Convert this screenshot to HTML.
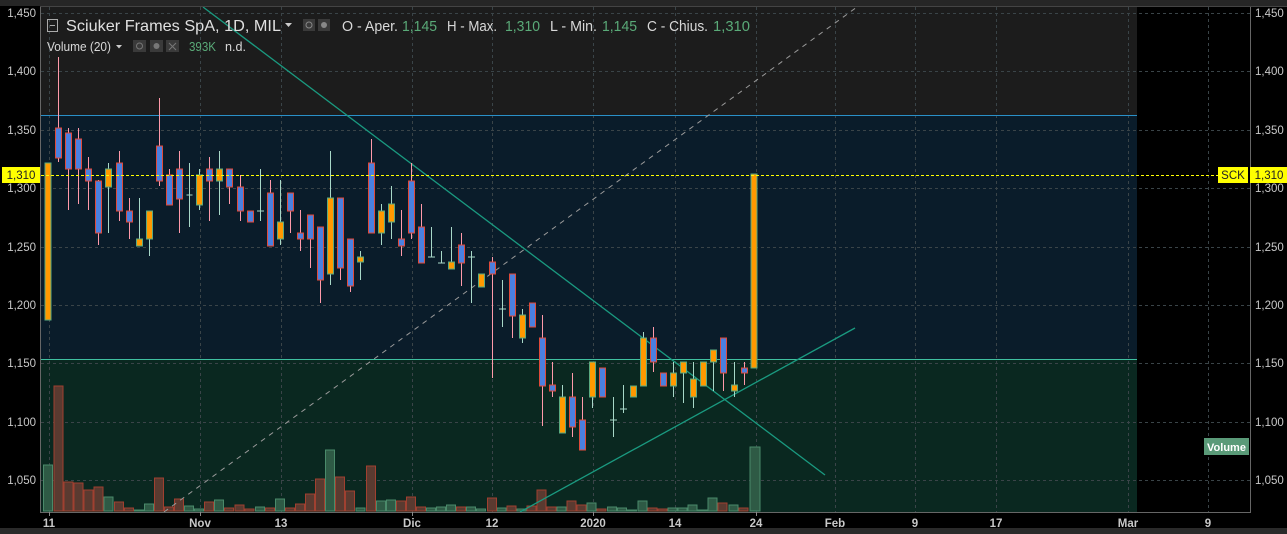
<!DOCTYPE html>
<html><head><meta charset="utf-8"><style>
html,body{margin:0;padding:0;background:#000;width:1287px;height:534px;overflow:hidden}
svg{display:block}
text{font-family:"Liberation Sans",sans-serif}
</style></head><body>
<svg width="1287" height="534" viewBox="0 0 1287 534" xmlns="http://www.w3.org/2000/svg">
<rect x="0" y="0" width="1287" height="534" fill="#000"/>
<rect x="0" y="0" width="1287" height="6" fill="#262626"/>
<rect x="0" y="528" width="1287" height="6" fill="#2a2a2a"/>
<rect x="41" y="7" width="1096" height="108" fill="#1c1c1c"/>
<rect x="41" y="115" width="1096" height="244" fill="#0a1c2a"/>
<rect x="41" y="359" width="1096" height="153" fill="#0a2820"/>
<g stroke="#3a4448" stroke-width="1" stroke-dasharray="3,3" shape-rendering="crispEdges">
<line x1="41" y1="13.5" x2="1250" y2="13.5"/><line x1="41" y1="71.5" x2="1250" y2="71.5"/>
<line x1="41" y1="130.5" x2="1250" y2="130.5"/><line x1="41" y1="188.5" x2="1250" y2="188.5"/>
<line x1="41" y1="247.5" x2="1250" y2="247.5"/><line x1="41" y1="305.5" x2="1250" y2="305.5"/>
<line x1="41" y1="363.5" x2="1250" y2="363.5"/><line x1="41" y1="422.5" x2="1250" y2="422.5"/>
<line x1="41" y1="480.5" x2="1250" y2="480.5"/>
<line x1="49.5" y1="7" x2="49.5" y2="512"/><line x1="200.5" y1="7" x2="200.5" y2="512"/>
<line x1="281.5" y1="7" x2="281.5" y2="512"/><line x1="412.5" y1="7" x2="412.5" y2="512"/>
<line x1="492.5" y1="7" x2="492.5" y2="512"/><line x1="593.5" y1="7" x2="593.5" y2="512"/>
<line x1="675.5" y1="7" x2="675.5" y2="512"/><line x1="756.5" y1="7" x2="756.5" y2="512"/>
<line x1="835.5" y1="7" x2="835.5" y2="512"/><line x1="915.5" y1="7" x2="915.5" y2="512"/>
<line x1="996.5" y1="7" x2="996.5" y2="512"/><line x1="1128.5" y1="7" x2="1128.5" y2="512"/>
<line x1="1208.5" y1="7" x2="1208.5" y2="512"/>
</g>
<line x1="41" y1="115.5" x2="1137" y2="115.5" stroke="#2a90c8" stroke-width="1"/>
<line x1="41" y1="359.5" x2="1137" y2="359.5" stroke="#40c0a0" stroke-width="1"/>
<g stroke-width="1">
<g fill="#2e5a45" stroke="#4a8a6a">
<rect x="43.5" y="465" width="9" height="46"/><rect x="104" y="497" width="9" height="14"/>
<rect x="134.5" y="510" width="9" height="1"/><rect x="144.5" y="504" width="9" height="7"/>
<rect x="184.5" y="506" width="9" height="5"/><rect x="194.5" y="509" width="9" height="2"/>
<rect x="214.5" y="500" width="9" height="11"/><rect x="255.5" y="507" width="9" height="4"/>
<rect x="275.5" y="499" width="9" height="12"/><rect x="325.5" y="450" width="9" height="61"/>
<rect x="356" y="508" width="9" height="3"/><rect x="376.5" y="501" width="9" height="10"/>
<rect x="386.5" y="500" width="9" height="11"/><rect x="426.5" y="508" width="9" height="3"/>
<rect x="436.5" y="507" width="9" height="4"/><rect x="446.5" y="505" width="9" height="6"/>
<rect x="466.5" y="507" width="9" height="4"/><rect x="476.5" y="509" width="9" height="2"/>
<rect x="497" y="508" width="9" height="3"/><rect x="517" y="509" width="9" height="2"/>
<rect x="557" y="507" width="9" height="4"/><rect x="587" y="503" width="9" height="8"/>
<rect x="607.5" y="507" width="9" height="4"/><rect x="617.5" y="508" width="9" height="3"/>
<rect x="627.5" y="510" width="9" height="1"/><rect x="638" y="501" width="9" height="10"/>
<rect x="668" y="508" width="9" height="3"/><rect x="678" y="508" width="9" height="3"/>
<rect x="688" y="505" width="9" height="6"/><rect x="698" y="510" width="9" height="1"/>
<rect x="708" y="498" width="9" height="13"/><rect x="729" y="505" width="9" height="6"/>
<rect x="750" y="447" width="10" height="64"/>
</g>
<g fill="#5a3a30" stroke="#a04030">
<rect x="54" y="386" width="9" height="125"/><rect x="64" y="482" width="9" height="29"/>
<rect x="74" y="483" width="9" height="28"/><rect x="84" y="490" width="9" height="21"/>
<rect x="94" y="487" width="9" height="24"/><rect x="114.5" y="502" width="9" height="9"/>
<rect x="124.5" y="508" width="9" height="3"/><rect x="154.5" y="478" width="9" height="33"/>
<rect x="164.5" y="507" width="9" height="4"/><rect x="174.5" y="499" width="9" height="12"/>
<rect x="204.5" y="502" width="9" height="9"/><rect x="224.5" y="508" width="9" height="3"/>
<rect x="235" y="505" width="9" height="6"/><rect x="245" y="509" width="9" height="2"/>
<rect x="265.5" y="508" width="9" height="3"/><rect x="285.5" y="508" width="9" height="3"/>
<rect x="295.5" y="504" width="9" height="7"/><rect x="305.5" y="494" width="9" height="17"/>
<rect x="315.5" y="479" width="9" height="32"/><rect x="335.5" y="477" width="9" height="34"/>
<rect x="345.5" y="491" width="9" height="20"/><rect x="366.5" y="466" width="9" height="45"/>
<rect x="396.5" y="501" width="9" height="10"/><rect x="406.5" y="497" width="9" height="14"/>
<rect x="416.5" y="507" width="9" height="4"/><rect x="456.5" y="507" width="9" height="4"/>
<rect x="487.5" y="498" width="9" height="13"/><rect x="507" y="506" width="9" height="5"/>
<rect x="527" y="506" width="9" height="5"/><rect x="537" y="490" width="9" height="21"/>
<rect x="547" y="507" width="9" height="4"/><rect x="567" y="501" width="9" height="10"/>
<rect x="577" y="505" width="9" height="6"/><rect x="597" y="509" width="9" height="2"/>
<rect x="648" y="508" width="9" height="3"/><rect x="658" y="509" width="9" height="2"/>
<rect x="718" y="503" width="9" height="8"/><rect x="739" y="508" width="9" height="3"/>
</g>
</g>
<line x1="164" y1="512" x2="857" y2="7" stroke="#9a9a9a" stroke-width="1" stroke-dasharray="5,5"/>
<line x1="203" y1="7" x2="825" y2="475" stroke="#1a9a80" stroke-width="1.3"/>
<line x1="520" y1="512" x2="855" y2="328" stroke="#1a9a80" stroke-width="1.3"/>
<g stroke="#a8d8c8" stroke-width="1">
<line x1="108.5" y1="163" x2="108.5" y2="233"/><line x1="139.5" y1="198" x2="139.5" y2="245"/>
<line x1="149.5" y1="211" x2="149.5" y2="256"/><line x1="189.5" y1="163" x2="189.5" y2="227"/>
<line x1="199.5" y1="169" x2="199.5" y2="210"/><line x1="219.5" y1="151" x2="219.5" y2="215"/>
<line x1="260.5" y1="169" x2="260.5" y2="221"/><line x1="280.5" y1="180" x2="280.5" y2="245"/>
<line x1="330.5" y1="151" x2="330.5" y2="285"/><line x1="360.5" y1="251" x2="360.5" y2="280"/>
<line x1="381.5" y1="204" x2="381.5" y2="245"/><line x1="391.5" y1="186" x2="391.5" y2="239"/>
<line x1="431.5" y1="227" x2="431.5" y2="257"/><line x1="441.5" y1="251" x2="441.5" y2="263"/>
<line x1="451.5" y1="227" x2="451.5" y2="269"/><line x1="471.5" y1="251" x2="471.5" y2="303"/>
<line x1="502.5" y1="280" x2="502.5" y2="327"/><line x1="522.5" y1="309" x2="522.5" y2="343"/>
<line x1="562.5" y1="385" x2="562.5" y2="433"/><line x1="592.5" y1="362" x2="592.5" y2="408"/>
<line x1="613.5" y1="397" x2="613.5" y2="437"/><line x1="623.5" y1="385" x2="623.5" y2="413"/>
<line x1="643.5" y1="332" x2="643.5" y2="386"/><line x1="673.5" y1="362" x2="673.5" y2="397"/>
<line x1="683.5" y1="362" x2="683.5" y2="403"/><line x1="693.5" y1="362" x2="693.5" y2="408"/>
<line x1="713.5" y1="350" x2="713.5" y2="391"/><line x1="734.5" y1="362" x2="734.5" y2="397"/>
<line x1="186.5" y1="195" x2="192.5" y2="195"/><line x1="257" y1="211" x2="264" y2="211"/>
<line x1="428" y1="257" x2="435" y2="257"/><line x1="438" y1="263" x2="445" y2="263"/>
<line x1="468" y1="257" x2="475" y2="257"/><line x1="499" y1="309" x2="506" y2="309"/>
<line x1="610" y1="420" x2="617" y2="420"/><line x1="620" y1="409" x2="627" y2="409"/>
</g>
<g stroke="#ff9aaa" stroke-width="1">
<line x1="58.5" y1="57" x2="58.5" y2="162"/><line x1="68.5" y1="128" x2="68.5" y2="210"/>
<line x1="78.5" y1="128" x2="78.5" y2="204"/><line x1="88.5" y1="157" x2="88.5" y2="210"/>
<line x1="98.5" y1="180" x2="98.5" y2="245"/><line x1="119.5" y1="151" x2="119.5" y2="221"/>
<line x1="129.5" y1="198" x2="129.5" y2="239"/><line x1="159.5" y1="98" x2="159.5" y2="186"/>
<line x1="169.5" y1="169" x2="169.5" y2="205"/><line x1="179.5" y1="151" x2="179.5" y2="233"/>
<line x1="209.5" y1="157" x2="209.5" y2="221"/><line x1="229.5" y1="169" x2="229.5" y2="204"/>
<line x1="240.5" y1="175" x2="240.5" y2="221"/><line x1="270.5" y1="180" x2="270.5" y2="246"/>
<line x1="290.5" y1="193" x2="290.5" y2="233"/><line x1="300.5" y1="210" x2="300.5" y2="251"/>
<line x1="310.5" y1="215" x2="310.5" y2="268"/><line x1="320.5" y1="227" x2="320.5" y2="303"/>
<line x1="340.5" y1="198" x2="340.5" y2="280"/><line x1="350.5" y1="239" x2="350.5" y2="292"/>
<line x1="371.5" y1="139" x2="371.5" y2="233"/><line x1="401.5" y1="210" x2="401.5" y2="256"/>
<line x1="411.5" y1="163" x2="411.5" y2="239"/><line x1="421.5" y1="204" x2="421.5" y2="263"/>
<line x1="461.5" y1="233" x2="461.5" y2="286"/><line x1="492.5" y1="257" x2="492.5" y2="378"/>
<line x1="512.5" y1="274" x2="512.5" y2="338"/><line x1="542.5" y1="315" x2="542.5" y2="426"/>
<line x1="552.5" y1="362" x2="552.5" y2="397"/><line x1="572.5" y1="373" x2="572.5" y2="437"/>
<line x1="582.5" y1="397" x2="582.5" y2="450"/><line x1="653.5" y1="327" x2="653.5" y2="372"/>
<line x1="723.5" y1="338" x2="723.5" y2="391"/><line x1="744.5" y1="362" x2="744.5" y2="385"/>
</g>
<g fill="#ff9900" stroke="#5aaa80" stroke-width="1">
<rect x="45" y="163" width="6" height="157"/>
<rect x="105.5" y="169" width="6" height="18"/><rect x="136.5" y="239" width="6" height="7"/>
<rect x="146.5" y="211" width="6" height="28"/><rect x="196.5" y="175" width="6" height="30"/>
<rect x="216.5" y="169" width="6" height="12"/><rect x="277.5" y="222" width="6" height="17"/>
<rect x="327.5" y="198" width="6" height="76"/><rect x="357.5" y="257" width="6" height="5"/>
<rect x="378.5" y="211" width="6" height="22"/><rect x="388.5" y="204" width="6" height="18"/>
<rect x="448.5" y="262" width="6" height="7"/><rect x="478.5" y="274" width="6" height="13"/>
<rect x="519.5" y="315" width="6" height="23"/><rect x="559.5" y="397" width="6" height="36"/>
<rect x="589.5" y="362" width="6" height="35"/><rect x="630.5" y="386" width="6" height="11"/>
<rect x="640.5" y="338" width="6" height="48"/><rect x="670.5" y="373" width="6" height="13"/>
<rect x="680.5" y="362" width="6" height="11"/><rect x="690.5" y="379" width="6" height="18"/>
<rect x="700.5" y="362" width="6" height="24"/><rect x="710.5" y="350" width="6" height="12"/>
<rect x="731.5" y="385" width="6" height="6"/><rect x="751" y="174" width="6" height="194"/>
</g>
<g fill="#4a80e0" stroke="#e04a3a" stroke-width="1">
<rect x="55.5" y="128" width="6" height="30"/><rect x="65.5" y="133" width="6" height="36"/>
<rect x="75.5" y="139" width="6" height="30"/><rect x="85.5" y="169" width="6" height="12"/>
<rect x="95.5" y="181" width="6" height="52"/><rect x="116.5" y="163" width="6" height="48"/>
<rect x="126.5" y="211" width="6" height="11"/><rect x="156.5" y="146" width="6" height="35"/>
<rect x="166.5" y="175" width="6" height="30"/><rect x="176.5" y="169" width="6" height="30"/>
<rect x="206.5" y="169" width="6" height="12"/><rect x="226.5" y="169" width="6" height="18"/>
<rect x="237.5" y="187" width="6" height="24"/><rect x="247.5" y="211" width="6" height="11"/>
<rect x="267.5" y="193" width="6" height="53"/><rect x="287.5" y="193" width="6" height="18"/>
<rect x="297.5" y="233" width="6" height="6"/><rect x="307.5" y="215" width="6" height="24"/>
<rect x="317.5" y="227" width="6" height="53"/><rect x="337.5" y="198" width="6" height="70"/>
<rect x="347.5" y="239" width="6" height="47"/><rect x="368.5" y="163" width="6" height="70"/>
<rect x="398.5" y="239" width="6" height="7"/><rect x="408.5" y="181" width="6" height="52"/>
<rect x="418.5" y="227" width="6" height="36"/><rect x="458.5" y="245" width="6" height="18"/>
<rect x="489.5" y="262" width="6" height="12"/><rect x="509.5" y="274" width="6" height="42"/>
<rect x="529.5" y="303" width="6" height="24"/><rect x="539.5" y="338" width="6" height="48"/>
<rect x="549.5" y="385" width="6" height="6"/><rect x="569.5" y="397" width="6" height="30"/>
<rect x="579.5" y="420" width="6" height="30"/><rect x="599.5" y="368" width="6" height="29"/>
<rect x="650.5" y="338" width="6" height="24"/><rect x="660.5" y="373" width="6" height="13"/>
<rect x="720.5" y="338" width="6" height="35"/><rect x="741.5" y="368" width="6" height="5"/>
</g>
<line x1="41" y1="175.5" x2="1218" y2="175.5" stroke="#ffff00" stroke-width="1" stroke-dasharray="3,2" shape-rendering="crispEdges"/>
<line x1="40.5" y1="6" x2="40.5" y2="513" stroke="#666" stroke-width="1"/>
<line x1="1250.5" y1="6" x2="1250.5" y2="513" stroke="#666" stroke-width="1"/>
<line x1="40" y1="512.5" x2="1251" y2="512.5" stroke="#666" stroke-width="1"/>
<line x1="40" y1="6.5" x2="1287" y2="6.5" stroke="#444" stroke-width="1"/>
<g fill="#c8c8c8" font-size="11.5" text-anchor="end">
<text x="36" y="17">1,450</text><text x="36" y="75">1,400</text><text x="36" y="134">1,350</text>
<text x="36" y="251">1,250</text><text x="36" y="309">1,200</text><text x="36" y="367">1,150</text>
<text x="36" y="426">1,100</text><text x="36" y="484">1,050</text><text x="36" y="192">1,300</text>
</g>
<g fill="#c8c8c8" font-size="11.5">
<text x="1255" y="17">1,450</text><text x="1255" y="75">1,400</text><text x="1255" y="134">1,350</text>
<text x="1255" y="192">1,300</text><text x="1255" y="251">1,250</text><text x="1255" y="309">1,200</text>
<text x="1255" y="367">1,150</text><text x="1255" y="426">1,100</text><text x="1255" y="484">1,050</text>
</g>
<g fill="#c8c8c8" font-size="11.5" font-weight="bold" text-anchor="middle">
<text x="49" y="527">11</text><text x="200" y="527">Nov</text><text x="281" y="527">13</text>
<text x="412" y="527">Dic</text><text x="492" y="527">12</text><text x="593" y="527">2020</text>
<text x="675" y="527">14</text><text x="756" y="527">24</text><text x="835" y="527">Feb</text>
<text x="915" y="527">9</text><text x="996" y="527">17</text><text x="1128" y="527">Mar</text>
<text x="1208" y="527">9</text>
</g>
<g stroke="#888" stroke-width="1">
<line x1="49.5" y1="512" x2="49.5" y2="516"/><line x1="200.5" y1="512" x2="200.5" y2="516"/>
<line x1="412.5" y1="512" x2="412.5" y2="516"/><line x1="593.5" y1="512" x2="593.5" y2="516"/>
<line x1="756.5" y1="512" x2="756.5" y2="516"/>
</g>
<rect x="2" y="167" width="38" height="16" fill="#ffff00"/>
<text x="21" y="179" font-size="11.5" fill="#222" text-anchor="middle">1,310</text>
<rect x="1218" y="167" width="30" height="16" fill="#ffff00"/>
<text x="1233" y="179" font-size="11.5" fill="#222" text-anchor="middle">SCK</text>
<rect x="1250" y="167" width="37" height="16" fill="#ffff00"/>
<text x="1269" y="179" font-size="11.5" fill="#222" text-anchor="middle">1,310</text>
<rect x="1204" y="438" width="45" height="17" fill="#5a9a78"/>
<text x="1226.5" y="451" font-size="11" font-weight="bold" fill="#fff" text-anchor="middle">Volume</text>
<rect x="47.5" y="19.5" width="10" height="12" fill="none" stroke="#aaa" stroke-width="1"/>
<line x1="50" y1="25.5" x2="55" y2="25.5" stroke="#aaa"/>
<text x="66" y="31" font-size="16" fill="#e0e0e0" textLength="215" lengthAdjust="spacingAndGlyphs">Sciuker Frames SpA, 1D, MIL</text>
<path d="M285 23 L292 23 L288.5 27 Z" fill="#ccc"/>
<rect x="303" y="19" width="12" height="12" fill="#3a3a3a"/><circle cx="309" cy="25" r="3" fill="none" stroke="#888"/>
<rect x="318" y="19" width="12" height="12" fill="#3a3a3a"/><circle cx="324" cy="25" r="3" fill="#888"/>
<g font-size="15">
<text x="342" y="31" fill="#d8d8d8" textLength="56" lengthAdjust="spacingAndGlyphs">O - Aper.</text>
<text x="402" y="31" fill="#5aaa78" textLength="35" lengthAdjust="spacingAndGlyphs">1,145</text>
<text x="447" y="31" fill="#d8d8d8" textLength="50" lengthAdjust="spacingAndGlyphs">H - Max.</text>
<text x="505" y="31" fill="#5aaa78" textLength="35" lengthAdjust="spacingAndGlyphs">1,310</text>
<text x="550" y="31" fill="#d8d8d8" textLength="47" lengthAdjust="spacingAndGlyphs">L - Min.</text>
<text x="602" y="31" fill="#5aaa78" textLength="35" lengthAdjust="spacingAndGlyphs">1,145</text>
<text x="647" y="31" fill="#d8d8d8" textLength="61" lengthAdjust="spacingAndGlyphs">C - Chius.</text>
<text x="713" y="31" fill="#5aaa78" textLength="37" lengthAdjust="spacingAndGlyphs">1,310</text>
</g>
<text x="47" y="51" font-size="12.5" fill="#d8d8d8" textLength="64" lengthAdjust="spacingAndGlyphs">Volume (20)</text>
<path d="M116 45 L122 45 L119 48.5 Z" fill="#ccc"/>
<rect x="133" y="40" width="13" height="12" fill="#3a3a3a"/><circle cx="139.5" cy="46" r="3" fill="none" stroke="#777"/>
<rect x="150" y="40" width="13" height="12" fill="#3a3a3a"/><circle cx="156.5" cy="46" r="3" fill="#777"/>
<rect x="166" y="40" width="13" height="12" fill="#3a3a3a"/>
<path d="M169 43 L176 50 M176 43 L169 50" stroke="#777"/>
<text x="189" y="51" font-size="12.5" fill="#5aaa78" textLength="27" lengthAdjust="spacingAndGlyphs">393K</text>
<text x="225" y="51" font-size="12.5" fill="#d8d8d8" textLength="21" lengthAdjust="spacingAndGlyphs">n.d.</text>
</svg>
</body></html>
